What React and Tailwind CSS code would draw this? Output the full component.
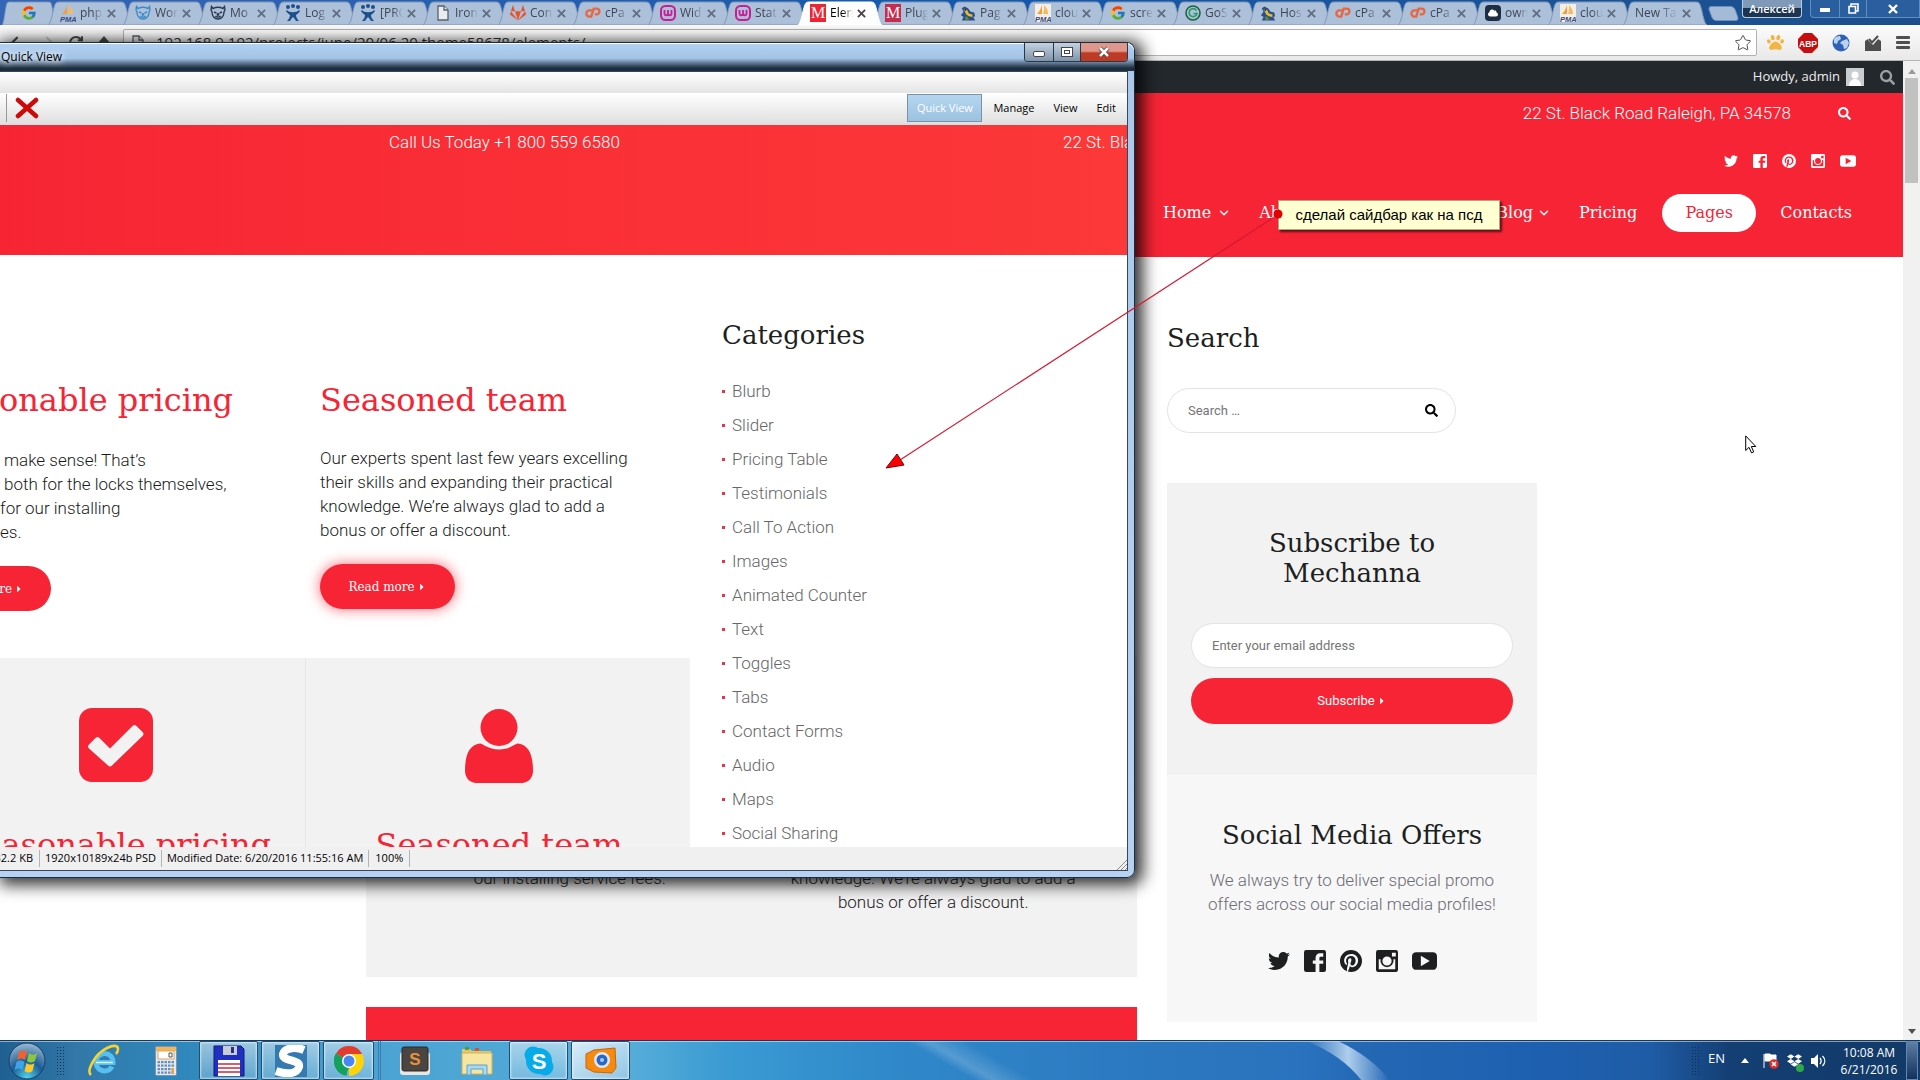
import React from "react";
import { FaTwitter, FaSearch, FaGitlab, FaCloud, FaDropbox, FaPaw, FaCaretRight } from "react-icons/fa";
import { FcGoogle } from "react-icons/fc";
import { ChevronDown, ArrowLeft, ArrowRight, RotateCw, Star } from "lucide-react";

const SLAB = "font-['Roboto_Slab','DejaVu_Serif',serif]";
const UI = "font-['Open_Sans','Noto_Sans',sans-serif]";

/* ---------- favicons ---------- */
function Pma({ boxed }) {
  return (
    <svg viewBox="0 0 16 18" className="h-[18px] w-4">
      {boxed && <rect width="16" height="18" fill="#f4efe4" />}
      <path d="M7 1v9H2C4 8 6 5 7 1z" fill="#f0a03c" />
      <path d="M9 1c3 3 4 6 4 9H8c1-3 1.500-6 1-9z" fill="#f5b866" />
      <text x="0" y="17.500" fontSize="7.500" fontWeight="bold" fontStyle="italic" fill="#394a80" fontFamily="Liberation Sans">PMA</text>
    </svg>
  );
}
function Bear({ color }) {
  return (
    <svg viewBox="0 0 16 16" className="size-4" fill="none" stroke={color} strokeWidth="1.400">
      <path d="M3 3.500L1.500 1.500 1 5l1 2c0 4 2.500 7 6 7s6-3 6-7l1-2-.5-3.500L13 3.500C10 2 6 2 3 3.500z" />
      <path d="M4 7l2.500 1M12 7L9.500 8M5.500 11c1 1.500 4 1.500 5 0" />
      <circle cx="8" cy="9.500" r=".7" fill={color} />
    </svg>
  );
}
function Jira() {
  return (
    <svg viewBox="0 0 16 18" className="h-[18px] w-4" fill="#1d4f8c">
      <circle cx="3" cy="3" r="2" /><circle cx="8" cy="2" r="2" /><circle cx="13" cy="3" r="2" />
      <path d="M2 6c2 3 10 3 12 0l1 1c-1 2-3 3-4 4 0 2 1 4 3 6h-3c-1-2-2-3-3-4-1 1-2 2-3 4H2c2-2 3-4 3-6-1-1-3-2-4-4z" />
    </svg>
  );
}
function PageIcon() {
  return (
    <svg viewBox="0 0 12 16" className="h-4 w-3 shrink-0" fill="#e9edf3" stroke="#5a6068" strokeWidth="1.300">
      <path d="M1 1h6l4 4v10H1z" /><path d="M7 1v4h4" />
    </svg>
  );
}
function CPanel() {
  return (
    <svg viewBox="0 0 18 16" className="h-4 w-[18px]" fill="none" stroke="#e8663f" strokeWidth="2.600">
      <path d="M8.500 5H5a3.500 3.500 0 0 0 0 7h2L9.800 3H13a3.200 3.200 0 0 1 0 6.500h-2" />
    </svg>
  );
}
function Wmark() {
  return (
    <svg viewBox="0 0 16 16" className="size-4" fill="none" stroke="#c81c93" strokeWidth="2">
      <rect x="1" y="1" width="14" height="14" rx="4.500" /><path d="M4.500 5v3.500a1.700 1.700 0 0 0 3.500 0V5v3.500a1.700 1.700 0 0 0 3.500 0V5" strokeWidth="1.800" />
    </svg>
  );
}
function Mmark({ dim }) {
  return <span className={`flex h-[18px] w-4 items-center justify-center font-['Liberation_Serif',serif] text-base text-white ${dim ? "bg-[#c62c50]" : "bg-[#ee2433]"}`}>M</span>;
}
function Joom() {
  return (
    <svg viewBox="0 0 18 18" className="size-[17px]">
      <path d="M2 3l3-2 4 2 3 4 4 1 1 4-2 1 2 4H2l2-4-3-2 3-4z" fill="#2c4f8c" />
      <path d="M4 4l4 1 2 4 4 1v3l-4-1-3-2z" fill="#e8bd2d" />
      <path d="M6 12l3 1 1 3H6z" fill="#5d8f3a" /><circle cx="6" cy="5" r="1" fill="#222" />
    </svg>
  );
}
function GoS() {
  return (
    <svg viewBox="0 0 16 16" className="size-4" fill="none" strokeWidth="1.600">
      <circle cx="8" cy="8" r="7" stroke="#17643f" /><path d="M11.500 5.500a4 4 0 1 0 .5 3H8.500" stroke="#2a9d63" />
    </svg>
  );
}
function Own() {
  return <span className="flex size-4 items-center justify-center rounded-sm bg-[#1d2d44] text-[10px] text-white"><FaCloud /></span>;
}

const TABS = [
  ["php", <Pma />], ["Wor", <Bear color="#3c8ac9" />], ["Mo", <Bear color="#2b3b50" />], ["Log", <Jira />], ["[PRO", <Jira />],
  ["Iron", <PageIcon />], ["Con", <FaGitlab className="size-4 text-[#e65328]" />], ["cPa", <CPanel />], ["Wid", <Wmark />], ["Stat", <Wmark />],
  ["Elen", <Mmark />, true], ["Plug", <Mmark dim />], ["Pag", <Joom />], ["clou", <Pma boxed />], ["scre", <FcGoogle className="size-4" />],
  ["GoS", <GoS />], ["Hos", <Joom />], ["cPa", <CPanel />], ["cPa", <CPanel />], ["own", <Own />], ["clou", <Pma boxed />], ["New Ta", null],
];

function TabShape({ active }) {
  return (
    <svg viewBox="0 0 84 24" preserveAspectRatio="none" className="absolute inset-0 size-full">
      <path d="M0 24C4 22 5 5 8 2Q9 1 11 1H73Q75 1 76 2C79 5 80 22 84 24z" fill={active ? "#fdfdfd" : "#adc0d9"} stroke={active ? "#fff" : "#8298b8"} strokeWidth="1" />
    </svg>
  );
}
function Tab({ label, icon, active }) {
  return (
    <button className={`relative -mr-[9px] h-6 w-[84px] shrink-0 ${active ? "z-10" : ""}`}>
      <TabShape active={active} />
      <span className="relative flex h-6 items-center gap-1 pr-4 pl-3">
        {icon && <span className="flex w-4 shrink-0 justify-center">{icon}</span>}
        <span className={`flex-1 overflow-hidden text-left text-xs whitespace-nowrap [mask-image:linear-gradient(to_right,black_55%,transparent)] ${active ? "text-black" : "text-[#3c4653]"}`}>{label}</span>
        <svg viewBox="0 0 10 10" className={`size-[9px] shrink-0 ${active ? "text-[#4a4048]" : "text-[#5f6d80]"}`} stroke="currentColor" strokeWidth="2"><path d="M1 1l8 8M9 1L1 9" /></svg>
      </span>
    </button>
  );
}

function TabStrip() {
  return (
    <div className={`flex h-[25px] shrink-0 items-end bg-linear-to-r from-[#3565b5] via-[#1259ad] to-[#1d4f8b] ${UI}`}>
      <button aria-label="Google" className="relative ml-0.5 -mr-2 h-6 w-[54px] shrink-0">
        <TabShape />
        <span className="relative flex h-6 items-center justify-center"><FcGoogle className="size-4" /></span>
      </button>
      {TABS.map(([label, icon, active], i) => <Tab key={i} label={label} icon={icon} active={active} />)}
      <button aria-label="New tab" className="mb-1 ml-3 h-[15px] w-[27px] shrink-0 skew-x-[20deg] rounded-sm border border-[#6f90bb] bg-[#a4bbd8]" />
      <div className="ml-auto flex h-[19px] items-start gap-2 self-start">
        <button className="h-[18px] rounded-b border border-t-0 border-[#b9cbe0] bg-linear-to-b from-[#7f99b9] from-50% to-[#1d3450] to-50% px-1.5 text-[11px] leading-4 font-semibold text-white">Алексей</button>
        <div className="flex h-[18px] rounded-bl border border-t-0 border-[#5f8dbf] bg-[#2a5f9f] text-white">
          <button aria-label="Minimize" className="flex w-7 items-center justify-center"><span className="mt-0.5 h-1 w-2.5 bg-white" /></button>
          <button aria-label="Restore" className="flex w-7 items-center justify-center border-x border-[#5f8dbf]">
            <svg viewBox="0 0 11 11" className="size-[11px]" fill="none" stroke="white" strokeWidth="1.600"><path d="M3 3V1h7v7H8" /><path d="M1 3.500h6.500V10H1z" /></svg>
          </button>
          <button aria-label="Close" className="flex w-[52px] items-center justify-center">
            <svg viewBox="0 0 10 10" className="size-2.5" stroke="white" strokeWidth="2.400"><path d="M1 1l8 8M9 1L1 9" /></svg>
          </button>
        </div>
      </div>
    </div>
  );
}

function AddressBar() {
  return (
    <div className={`flex h-9 shrink-0 items-center border-b border-[#b5b5b5] bg-linear-to-b from-[#fbfbfb] to-[#e9e9e9] pl-2 text-[#4a4a4a] ${UI}`}>
      <div className="flex w-[115px] items-center gap-3">
        <ArrowLeft size={18} strokeWidth={3} /><ArrowRight size={18} strokeWidth={3} className="text-[#cfcfcf]" /><RotateCw size={16} strokeWidth={3} />
        <svg viewBox="0 0 16 16" className="size-4" fill="currentColor"><path d="M8 1l7 8h-2v6H3V9H1z" /></svg>
      </div>
      <div className="flex h-[27px] flex-1 items-center rounded-xs border border-[#b3b1b0] bg-white pr-1 pl-2">
        <PageIcon />
        <input aria-label="Address" defaultValue="192.168.9.192/projects/june/20/06.20.theme58678/elements/" className="ml-3 w-full bg-transparent text-[15px] text-[#333] outline-none" />
        <Star size={18} strokeWidth={1.300} className="shrink-0" />
      </div>
      <div className="flex w-[163px] items-center justify-between pr-2.5 pl-2.5">
        <FaPaw className="size-[17px] text-[#f2b544]" />
        <svg viewBox="0 0 20 20" className="size-5"><path d="M6 0h8l6 6v8l-6 6H6l-6-6V6z" fill="#c70d0d" /><text x="10" y="13.500" textAnchor="middle" fontSize="8.500" fontWeight="bold" fill="#fff" fontFamily="Liberation Sans">ABP</text></svg>
        <svg viewBox="0 0 18 18" className="size-[18px]"><circle cx="9" cy="9" r="8.500" fill="#2f62b4" /><path d="M2 5c2-3 5-3 6-3l1 3-3 2-1 3-3-1zM10 7l5-2 2 4-2 5-3 1-1-4-3-2z" fill="#b9d3ef" /></svg>
        <svg viewBox="0 0 18 18" className="size-[18px]"><path d="M1 7l3-2h10l3 2v10H1z" fill="#4d4d4d" /><path d="M4 6l5 5 6-7-3-2H8L4 5z" fill="#f3f3f3" /><path d="M5 5l3 3.500L14 2" stroke="#4d4d4d" strokeWidth="2" fill="none" /></svg>
        <svg viewBox="0 0 14 14" className="size-3.5" fill="#505050"><rect y="0" width="14" height="3" rx="1" /><rect y="5" width="14" height="3" rx="1" /><rect y="10" width="14" height="3" rx="1" /></svg>
      </div>
    </div>
  );
}

/* ---------- web page ---------- */
function Facebook() {
  return <svg viewBox="2 2 20 20" fill="currentColor" className="size-full"><path d="M4 2H20A2 2 0 0 1 22 4V20A2 2 0 0 1 20 22H4A2 2 0 0 1 2 20V4A2 2 0 0 1 4 2M19.500 5H16.500A4 4 0 0 0 12.500 9V11.500H10V14.500H12.500V22H16V14.500H19.500V11.500H16V9.200A1 1 0 0 1 17 8.200H19.500Z" /></svg>;
}
function Pinterest() {
  return <svg viewBox="2 2 20 20" fill="currentColor" className="size-full"><path d="M9.040 21.540C10 21.830 10.970 22 12 22A10 10 0 0 0 22 12A10 10 0 0 0 12 2A10 10 0 0 0 2 12C2 16.250 4.670 19.900 8.440 21.340C8.350 20.560 8.260 19.270 8.440 18.380L9.590 13.440C9.590 13.440 9.300 12.860 9.300 11.940C9.300 10.560 10.160 9.530 11.140 9.530C12 9.530 12.400 10.160 12.400 10.970C12.400 11.830 11.830 13.060 11.540 14.240C11.370 15.220 12.060 16.080 13.060 16.080C14.840 16.080 16.220 14.180 16.220 11.500C16.220 9.100 14.500 7.460 12.030 7.460C9.210 7.460 7.550 9.560 7.550 11.770C7.550 12.630 7.830 13.500 8.290 14.070C8.380 14.130 8.380 14.210 8.350 14.360L8.060 15.450C8.060 15.620 7.950 15.680 7.780 15.560C6.500 15 5.760 13.180 5.760 11.710C5.760 8.550 8 5.680 12.320 5.680C15.760 5.680 18.440 8.150 18.440 11.430C18.440 14.870 16.310 17.630 13.260 17.630C12.290 17.630 11.340 17.110 11 16.500L10.330 18.870C10.100 19.730 9.470 20.880 9.040 21.500V21.540Z" /></svg>;
}
function Instagram() {
  return <svg viewBox="0 0 20 20" fill="currentColor" fillRule="evenodd" className="size-full"><path d="M2 0h16a2 2 0 0 1 2 2v16a2 2 0 0 1-2 2H2a2 2 0 0 1-2-2V2a2 2 0 0 1 2-2zM14.500 2.500v3.500H18V2.500zM2.500 8.500V17.500h15V8.500h-1.600a6 6 0 1 1-11.800 0zM10 5.800a4.200 4.200 0 1 0 0 8.400 4.200 4.200 0 0 0 0-8.400z" /></svg>;
}
function Youtube() {
  return <svg viewBox="0 0 24 20" fill="currentColor" fillRule="evenodd" className="size-full"><path d="M4 1.500h16a4 4 0 0 1 4 4v9a4 4 0 0 1-4 4H4a4 4 0 0 1-4-4v-9a4 4 0 0 1 4-4zM8.500 5v10L17 10z" /></svg>;
}
function Socials({ small }) {
  const s = small ? "size-3.5" : "size-[22px]";
  const w = small ? "h-3.5 w-4" : "h-[22px] w-[25px]";
  return (
    <div className={`flex items-center ${small ? "gap-[15px]" : "justify-center gap-3.5"}`}>
      <a href="#" aria-label="Twitter" className={s}><FaTwitter className="size-full" /></a>
      <a href="#" aria-label="Facebook" className={s}><Facebook /></a>
      <a href="#" aria-label="Pinterest" className={s}><Pinterest /></a>
      <a href="#" aria-label="Instagram" className={s}><Instagram /></a>
      <a href="#" aria-label="YouTube" className={w}><Youtube /></a>
    </div>
  );
}

function SiteHeader() {
  return (
    <header className="flex h-[164px] shrink-0 flex-col items-end bg-[#f62434] pr-[47px] text-white">
      <div className="flex h-[41px] items-center text-[17px] font-light">
        <span>22 St. Black Road Raleigh, PA 34578</span>
        <button aria-label="Search" className="ml-[47px] pr-[5px]"><FaSearch size={13} /></button>
      </div>
      <div className="flex h-[53px] items-center"><Socials small /></div>
      <nav className={`flex h-[52px] w-[693px] items-center text-base ${SLAB}`}>
        <a href="#" className="flex items-center gap-1.5">Home <ChevronDown size={14} strokeWidth={2.500} /></a>
        <a href="#" className="ml-7">About</a>
        <a href="#" className="ml-auto flex items-center gap-1">Blog <ChevronDown size={14} strokeWidth={2.500} /></a>
        <a href="#" className="ml-7">Pricing</a>
        <a href="#" className="ml-[25px] flex h-[38px] w-[94px] items-center justify-center rounded-full bg-white text-[#f62434]">Pages</a>
        <a href="#" className="mr-1 ml-6">Contacts</a>
      </nav>
    </header>
  );
}

function SiteBody() {
  const heading = `text-[26px] leading-[30px] text-[#1d1f21] ${SLAB}`;
  const field = "h-[45px] w-full rounded-full border border-[#e3e3e3] bg-white px-5 text-[13px] text-[#555] outline-none placeholder:text-[#757575]";
  return (
    <main className="mx-auto flex w-full max-w-[1171px] gap-[30px]">
      <div className="flex-1 pt-[400px] text-[17px] leading-6 font-light text-[#222]">
        <section className="grid h-80 grid-cols-2 bg-[#f2f2f2] px-[22px] pt-[209px] text-center">
          <p>our installing service fees.</p>
          <p>knowledge. We’re always glad to add a<br />bonus or offer a discount.</p>
        </section>
        <section className="mt-[30px] h-40 bg-[#f62434]" />
      </div>
      <aside className="w-[370px] pt-[66px]">
        <h2 className={heading}>Search</h2>
        <form className="relative mt-[35px] w-[289px]">
          <input aria-label="Search" placeholder="Search …" className={field} />
          <button type="button" aria-label="Submit search" className="absolute top-4 right-[18px] text-black"><FaSearch size={13} /></button>
        </form>
        <section className="mt-[50px] flex h-[290px] flex-col items-center bg-[#f2f2f2] px-6 pt-[45px]">
          <h2 className={`text-center ${heading}`}>Subscribe to<br />Mechanna</h2>
          <input aria-label="Email" placeholder="Enter your email address" className={`mt-[35px] shrink-0 ${field}`} />
          <button className="mt-2.5 flex h-[46px] w-full shrink-0 items-center justify-center rounded-full bg-[#f62434] text-[13px] text-white">Subscribe <FaCaretRight size={10} className="ml-0.5" /></button>
        </section>
        <section className="h-[249px] border-t border-[#ececec] bg-[#f7f7f7] pt-[46px] text-center">
          <h2 className={heading}>Social Media Offers</h2>
          <p className="mt-[18px] mb-[34px] text-[17px] leading-6 font-light text-[#6b6b73]">We always try to deliver special promo<br />offers across our social media profiles!</p>
          <div className="text-[#1d1f21]"><Socials /></div>
        </section>
      </aside>
    </main>
  );
}

function Scrollbar() {
  return (
    <div className="flex w-[17px] shrink-0 flex-col items-center bg-[#f1f1f1] py-1.5">
      <span className="mt-0.5 border-x-4 border-b-[5px] border-x-transparent border-b-[#9a9a9a]" />
      <span className="mt-1 h-[105px] w-[13px] bg-[#c1c1c1]" />
      <span className="mt-auto border-x-4 border-t-[5px] border-x-transparent border-t-[#505050]" />
    </div>
  );
}

/* ---------- Quick View window ---------- */
const CATEGORIES = ["Blurb", "Slider", "Pricing Table", "Testimonials", "Call To Action", "Images", "Animated Counter", "Text", "Toggles", "Tabs", "Contact Forms", "Audio", "Maps", "Social Sharing"];

function CheckSquare() {
  return (
    <svg viewBox="0 0 74 74" className="size-[74px]"><rect width="74" height="74" rx="13" fill="#f62434" /><path d="M10 36.500l6.500-6.500q2-2 4 0L31 40.500 53.500 18q2-2 4 0l6 6q2 2 0 4L33 57.500q-2 2-4 0L10 40.500q-2-2 0-4z" fill="#f2f2f2" /></svg>
  );
}
function Person() {
  return (
    <svg viewBox="0 0 68 74" className="h-[74px] w-[68px]" fill="#f62434"><ellipse cx="34" cy="18.500" rx="18.500" ry="18.500" /><path d="M15 34.500C4 36 0 46 0 62c0 7 5 12 11.500 12h45C63 74 68 69 68 62c0-16-4-26-15-27.500-3 0-8 6-19 6s-16-6-19-6z" /></svg>
  );
}

function ImageView() {
  const title = `text-[32px] leading-10 whitespace-nowrap text-[#f62434] ${SLAB}`;
  const copy = "text-[17px] leading-6 font-light whitespace-nowrap text-[#1a1a1a]";
  const pill = `flex h-[45px] items-center gap-0.5 rounded-full bg-[#f62434] text-xs text-white ${SLAB}`;
  return (
    <div className="flex min-h-0 flex-1 flex-col overflow-hidden bg-white font-['Roboto',sans-serif]">
      <div className="flex h-[130px] shrink-0 items-start justify-between overflow-hidden bg-linear-to-r from-[#f72534] to-[#fc3838] pt-1 pl-[389px] text-[17px] leading-[26px] font-light text-white">
        <span>Call Us Today +1 800 559 6580</span>
        <span className="w-16 overflow-hidden whitespace-nowrap">22 St. Black</span>
      </div>
      <div className="flex min-h-0 flex-1 overflow-hidden">
        <div className="flex w-[690px] shrink-0 flex-col pt-[125px]">
          <div className="flex h-[278px] shrink-0">
            <div className="w-80 overflow-hidden">
              <h2 className={`flex w-[233px] justify-end ${title}`}>onable pricing</h2>
              <p className={`mt-7 ${copy}`}><span className="pl-1">make sense! That’s</span><br /><span className="pl-1">both for the locks themselves,</span><br />for our installing<br />es.</p>
              <button className={`mt-[22px] w-[51px] justify-end rounded-l-none pr-[27px] ${pill}`}>ore <FaCaretRight size={10} className="shrink-0" /></button>
            </div>
            <div>
              <h2 className={title}>Seasoned team</h2>
              <p className={`mt-[26px] ${copy}`}>Our experts spent last few years excelling<br />their skills and expanding their practical<br />knowledge. We’re always glad to add a<br />bonus or offer a discount.</p>
              <button className={`mt-[22px] w-[135px] justify-center shadow-[0_0_12px_2px_rgba(246,36,52,0.5)] ${pill}`}>Read more <FaCaretRight size={10} className="shrink-0" /></button>
            </div>
          </div>
          <div className="flex flex-1 bg-[#f2f2f2]">
            <div className="flex w-[306px] flex-col border-r border-[#e6e6e6] pt-[50px]">
              <div className="pl-[79px]"><CheckSquare /></div>
              <h2 className={`mt-[43px] flex w-[271px] justify-end ${title}`}>asonable pricing</h2>
            </div>
            <div className="flex flex-1 flex-col items-center pt-[51px] pl-0.5">
              <Person />
              <h2 className={`mt-[42px] ${title}`}>Seasoned team</h2>
            </div>
          </div>
        </div>
        <div className="pt-[65px] pl-8">
          <h2 className={`text-[26px] leading-[30px] text-[#1d1f21] ${SLAB}`}>Categories</h2>
          <ul className="mt-6 text-[17px] leading-[34px] font-light text-[#666]">
            {CATEGORIES.map((c) => (
              <li key={c} className="flex items-center gap-[7px]"><span className="size-[3px] bg-[#e5344a]" /><a href="#">{c}</a></li>
            ))}
          </ul>
        </div>
      </div>
    </div>
  );
}

function QuickViewWindow() {
  return (
    <div className={`absolute top-[42px] left-0 flex h-[836px] w-[1135px] flex-col rounded-r-lg border border-l-0 border-[#1b2c40] bg-linear-to-b from-[#a9c8ea] to-[#b6d2f0] pr-1.5 pb-1.5 shadow-[4px_3px_16px_4px_rgba(0,0,0,0.8)] ${UI}`}>
      <div className="-mr-1.5 flex h-7 shrink-0 items-start justify-between rounded-tr-lg bg-linear-to-b from-[#b4d2f2] from-0% via-[#a3c3e6] via-55% to-[#1e2e3c] to-90% pr-1.5 shadow-[inset_0_1px_0_#fff]">
        <span className="pl-px text-xs leading-[28px] text-black [text-shadow:0_0_6px_#fff,0_0_8px_#fff]">Quick View</span>
        <div className="flex h-[19px] overflow-hidden rounded-b border border-t-0 border-[#27384b]">
          <button aria-label="Minimize" className="flex w-7 items-center justify-center bg-linear-to-b from-[#c5d2df] to-[#7f93a8]"><span className="mt-1 h-1.5 w-3 rounded-xs border border-[#445] bg-white" /></button>
          <button aria-label="Maximize" className="flex w-7 items-center justify-center border-x border-[#27384b] bg-linear-to-b from-[#c5d2df] to-[#7f93a8]"><span className="flex h-2.5 w-3 items-center justify-center border border-[#445] bg-white"><span className="h-1 w-1.5 border border-[#445]" /></span></button>
          <button aria-label="Close" className="flex w-[46px] items-center justify-center bg-linear-to-b from-[#e0978b] from-45% to-[#bf3a24] to-55%">
            <svg viewBox="0 0 12 12" className="size-3"><path d="M2 2l8 8M10 2l-8 8" stroke="#5a2a2a" strokeWidth="4" /><path d="M2 2l8 8M10 2l-8 8" stroke="#fff" strokeWidth="2.600" /></svg>
          </button>
        </div>
      </div>
      <div className="flex min-h-0 flex-1 flex-col border border-l-0 border-[#33485e]">
        <div className="h-[21px] shrink-0 bg-linear-to-b from-white to-[#e4e4e4]" />
        <div className="flex h-8 shrink-0 items-start justify-between bg-linear-to-b from-white to-[#dedede] pt-px text-[11px] text-black">
          <div className="flex h-7 items-center gap-2 pl-1.5">
            <span className="h-full w-px bg-[#999]" />
            <button aria-label="Delete"><svg viewBox="0 0 24 22" className="h-[22px] w-6" stroke="#cc0a0a" strokeWidth="4.500" strokeLinecap="round"><path d="M3 3l18 16M21 3L3 19" /></svg></button>
          </div>
          <div className="flex h-7 items-center pr-[11px]">
            <button className="h-7 w-[75px] border border-[#7a91a6] bg-linear-to-b from-[#b5d6f0] to-[#9cc2e0] text-white">Quick View</button>
            <button className="ml-[11px]">Manage</button>
            <button className="ml-[19px]">View</button>
            <button className="ml-[19px]">Edit</button>
          </div>
        </div>
        <ImageView />
        <div className="flex h-[23px] shrink-0 items-center bg-[#f0f0f0] text-[11px] whitespace-nowrap text-black">
          <span className="flex w-[33px] justify-end overflow-hidden">32.2 KB</span>
          <span className="ml-1.5 border-x border-[#b5b5b5] px-[5px]">1920x10189x24b PSD</span>
          <span className="px-[5px]">Modified Date: 6/20/2016 11:55:16 AM</span>
          <span className="border-x border-[#b5b5b5] px-1.5">100%</span>
          <svg viewBox="0 0 10 10" className="ml-auto size-2.5 self-end" stroke="#8a8a8a"><path d="M0 10L10 0M4 10l6-6M8 10l2-2" /></svg>
        </div>
      </div>
    </div>
  );
}

function Annotation() {
  return (
    <>
      <div className="absolute top-[200px] left-[1278px] flex h-[30px] w-[222px] items-center justify-center border border-[#a9a988] bg-[#ffffd2] font-['Liberation_Sans',sans-serif] text-[15px] text-black shadow-[2px_2px_2px_rgba(0,0,0,0.6)]">сделай сайдбар как на псд</div>
      <svg viewBox="0 0 410 280" className="pointer-events-none absolute top-[200px] left-[880px] h-[280px] w-[410px]">
        <path d="M399 14L20 260" stroke="#d81830" strokeWidth="1.200" />
        <path d="M6 268l11-14 7 11z" fill="#f00" stroke="#700" strokeWidth="1" />
        <circle cx="398" cy="14" r="4.500" fill="#e00000" />
      </svg>
      <svg viewBox="0 0 12 19" className="pointer-events-none absolute top-[435px] left-[1745px] h-[19px] w-3"><path d="M.7.900v14.600l3.300-3.200 2.500 5.600 2.200-1-2.400-5.400h4.500z" fill="#fff" stroke="#000" /></svg>
    </>
  );
}

/* ---------- taskbar ---------- */
function TaskItem({ label, w, open, light, children }) {
  return (
    <button aria-label={label} className={`flex h-full items-center justify-center ${w} ${open ? "rounded-xs border border-[#214f74] shadow-[inset_0_0_2px_1px_rgba(255,255,255,0.6)]" : ""} ${open ? (light ? "bg-linear-to-br from-[#e8f4fc]/90 to-[#9dcbe8]/80" : "bg-linear-to-b from-white/50 to-white/20") : ""}`}>{children}</button>
  );
}
function Grip() {
  return <span className="h-[30px] w-[9px] bg-[radial-gradient(#0b2f52_1px,transparent_1px)] bg-size-[3px_3px]" />;
}

function Taskbar() {
  return (
    <footer className={`relative z-10 flex h-10 shrink-0 items-center overflow-hidden border-t border-[#12395f] bg-[linear-gradient(30deg,transparent_49%,#ffffff30_50%,transparent_52%),linear-gradient(90deg,#1f5f92_0%,#3278a9_4%,#2f86ba_9%,#4ba3d3_20%,#55acd9_33%,#3a9ad2_38%,#3089ca_46%,#2b78c0_60%,#2a72bd_68%,#2468b4_71%,#1d60b0_80%,#1f5ca6_86%,#143f74_90%,#123a68_100%)] shadow-[inset_0_1px_0_rgba(255,255,255,0.5)] ${UI}`}>
      <svg viewBox="0 0 90 40" className="pointer-events-none absolute inset-y-0 left-[68%] h-10 w-[90px]">
        <defs><linearGradient id="ray" x1="0" y1="0" x2="1" y2="0"><stop offset="0" stopColor="#cfe6fa" stopOpacity="0" /><stop offset=".5" stopColor="#cfe6fa" stopOpacity=".8" /><stop offset="1" stopColor="#cfe6fa" stopOpacity="0" /></linearGradient></defs>
        <path d="M0 0h32q34 16 52 40H56Q36 14 0 0z" fill="url(#ray)" />
      </svg>
      <button aria-label="Start" className="ml-2">
        <svg viewBox="0 0 38 38" className="size-[38px]">
          <defs><radialGradient id="orb" cx="50%" cy="95%" r="90%"><stop offset="0" stopColor="#4fd0f0" /><stop offset="0.500" stopColor="#1a5c96" /><stop offset="1" stopColor="#8fb2cc" /></radialGradient></defs>
          <circle cx="19" cy="19" r="18" fill="url(#orb)" stroke="#16405f" />
          <path d="M11 10c3-2 5-2 8 0l-2 8c-3-2-5-2-8 0z" fill="#f0622d" /><path d="M21 11c3 2 5 2 8 0l-2 8c-3 2-5 2-8 0z" fill="#8cc63e" />
          <path d="M8.500 20c3-2 5-2 8 0l-2 8c-3-2-5-2-8 0z" fill="#3fa3e8" /><path d="M18.500 21c3 2 5 2 8 0l-2 8c-3 2-5 2-8 0z" fill="#fcc92c" />
        </svg>
      </button>
      <span className="mr-2 ml-2.5 flex"><Grip /></span>
      <TaskItem label="Internet Explorer" w="w-[62px]">
        <svg viewBox="0 0 34 34" className="size-[34px]" fill="none"><path d="M9 18.500h17c0-6-4-9-8.500-9S9 13 9 18s3.500 9 8.500 9c3.500 0 6-1.500 7.500-4.500" stroke="#56c0f0" strokeWidth="5" /><path d="M9 18.500h17" stroke="#d8f3ff" strokeWidth="1.500" /><path d="M4 31C-1 27 8 10 20 4c6-3 11-3 11 1 0 2-1 4-2 5" stroke="#f7d231" strokeWidth="2.600" /></svg>
      </TaskItem>
      <TaskItem label="Calculator" w="w-[62px]">
        <svg viewBox="0 0 22 30" className="h-[30px] w-[22px]"><rect x=".5" y=".5" width="21" height="29" rx="1.500" fill="#dfeaf4" stroke="#7d96ad" /><path d="M1 1h20v4H1z" fill="#f3b45c" /><rect x="3" y="5" width="16" height="8" fill="#fff" stroke="#e0a357" /><path d="M14 7h3v4h-3z" fill="none" stroke="#555" /><g fill="#6e8db0">{[15, 18.500, 22, 25.500].map((y) => [2.500, 6, 9.500, 13, 16.500].map((x) => <rect key={`${x}-${y}`} x={x} y={y} width="2.500" height="2.200" />))}</g><rect x="16.500" y="22" width="2.500" height="5.700" fill="#f0a03c" /></svg>
      </TaskItem>
      <div className="ml-0.5 flex h-full gap-[3px]">
        <TaskItem label="File manager" w="w-[59px]" open>
          <svg viewBox="0 0 32 32" className="size-8"><path d="M1 1h27l3 3v27H1z" fill="#1f2fc4" stroke="#101a70" /><rect x="10" y="1" width="14" height="9" fill="#c9ccd4" /><rect x="18" y="2" width="3" height="6" fill="#22308e" /><rect x="5" y="15" width="22" height="16" fill="#fff" /><path d="M5 19h22M5 23h22M5 27h22" stroke="#c92a3a" strokeWidth="1.300" /></svg>
        </TaskItem>
        <TaskItem label="Snagit" w="w-[59px]" open>
          <svg viewBox="0 0 32 32" className="size-8"><rect width="32" height="32" fill="#3479b0" /><path d="M29 5C22 2 10 2 8 9c-1 8 18 5 16 13-2 7-12 8-23 4" stroke="#fff" strokeWidth="8" fill="none" /></svg>
        </TaskItem>
        <TaskItem label="Chrome" w="w-[51px]" open>
          <svg viewBox="0 0 30 30" className="size-[30px]"><path d="M15 15L2 7.500A15 15 0 0 1 28 7.500z" fill="#e33b2e" /><path d="M15 15V8h13.200A15 15 0 0 1 15 30z" fill="#fcd209" /><path d="M15 15l-2.500 14.800A15 15 0 0 1 2 7.500z" fill="#16a05d" /><path d="M2 7.500L9 18.500 15 22l-4.500 7.300A15 15 0 0 1 2 7.500z" fill="#16a05d" /><circle cx="15" cy="15" r="7" fill="#fff" /><circle cx="15" cy="15" r="5.500" fill="#4587f3" /></svg>
        </TaskItem>
      </div>
      <span className="ml-1 h-full w-[3px] border-x border-[#3c7dac]" />
      <TaskItem label="Sublime Text" w="ml-[3px] w-[62px]">
        <svg viewBox="0 0 30 30" className="size-[30px]"><rect x="0" y="6" width="30" height="23" rx="3" fill="#e9e6e2" /><rect x="2" y="1" width="26" height="24" rx="2" fill="#4a4541" stroke="#2d2926" /><text x="15" y="19" textAnchor="middle" fontSize="17" fontWeight="bold" fill="#e8913e" fontFamily="Liberation Sans">S</text></svg>
      </TaskItem>
      <TaskItem label="Explorer" w="w-[62px]">
        <svg viewBox="0 0 32 32" className="size-8"><path d="M1 4h8l2 2h19v22H1z" fill="#e5c766" /><path d="M1 8h30v21H1z" fill="#f7e6a2" stroke="#d0b259" /><path d="M6 30V20h20v10h-4v-6H10v6z" fill="#a7daf2" stroke="#5aa3cc" /><rect x="4" y="2" width="4" height="3" fill="#45a048" /><rect x="14" y="3" width="4" height="3" fill="#d6532c" /></svg>
      </TaskItem>
      <div className="ml-px flex h-full gap-[3px]">
        <TaskItem label="Skype" w="w-[59px]" open>
          <svg viewBox="0 0 30 30" className="size-[30px]"><circle cx="9" cy="9" r="8.500" fill="#08abea" /><circle cx="21" cy="21" r="8.500" fill="#08abea" /><circle cx="15" cy="15" r="13" fill="#08abea" /><text x="15" y="23" textAnchor="middle" fontSize="22" fontWeight="bold" fill="#fff" fontFamily="Liberation Sans">S</text></svg>
        </TaskItem>
        <TaskItem label="Image viewer" w="w-[59px]" open light>
          <svg viewBox="0 0 32 28" className="h-7 w-8"><path d="M9 3l21-2 1 20-4 5-18-1-8-4V7z" fill="#f48a10" stroke="#c96508" /><circle cx="17" cy="13" r="8" fill="#dfe9f2" /><circle cx="17" cy="13" r="5.500" fill="#2a66c6" /><circle cx="17" cy="13" r="2" fill="#a5d0f5" /></svg>
        </TaskItem>
      </div>
      <div className="ml-auto flex h-full items-center text-xs text-white">
        <Grip />
        <span className="ml-2 pb-1 text-[13px]">EN</span>
        <span className="ml-4 border-x-4 border-b-[5px] border-x-transparent border-b-white" />
        <svg viewBox="0 0 16 16" className="ml-3.5 size-4"><path d="M1 1v14M2 1h5l1 1h5v7H8L7 8H2z" fill="#fff" stroke="#fff" /><circle cx="11" cy="11" r="4.800" fill="#df2c26" /><path d="M9 9l4 4M13 9l-4 4" stroke="#fff" strokeWidth="1.600" /></svg>
        <span className="relative ml-2 flex"><FaDropbox size={15} /><span className="absolute -right-0.5 -bottom-1 size-2 rounded-full bg-[#2fa84a]" /></span>
        <svg viewBox="0 0 16 16" className="ml-2 size-4" fill="#fff"><path d="M1 5h3l4-4v14l-4-4H1z" /><path d="M10 5c1.500 2 1.500 4 0 6M12.500 3c3 3 3 7 0 10" fill="none" stroke="#fff" strokeWidth="1.300" /></svg>
        <div className="ml-3.5 w-[58px] text-center leading-[17px]">10:08 AM<br />6/21/2016</div>
        <button aria-label="Show desktop" className="mr-0.5 ml-2 h-full w-3 border border-[#5f87b4] bg-linear-to-b from-[#5f7fa5] to-[#12315c]" />
      </div>
    </footer>
  );
}

export default function App() {
  return (
    <div className="relative flex h-screen flex-col overflow-hidden bg-white font-['Roboto',sans-serif]">
      <TabStrip />
      <AddressBar />
      <div className="flex min-h-0 flex-1">
        <div className="flex min-w-0 flex-1 flex-col overflow-hidden">
          <div className={`flex h-8 shrink-0 items-center justify-end gap-1.5 bg-[#23282d] pr-2 text-[13px] text-[#eee] ${UI}`}>
            <span>Howdy, admin</span>
            <svg viewBox="0 0 18 18" className="mr-2.5 size-[18px]"><rect width="18" height="18" fill="#c9cdd0" /><circle cx="9" cy="7" r="3.500" fill="#fff" /><path d="M3 18c0-5 3-7 6-7s6 2 6 7z" fill="#fff" /></svg>
            <FaSearch size={15} className="text-[#9ca1a6]" />
          </div>
          <SiteHeader />
          <SiteBody />
        </div>
        <Scrollbar />
      </div>
      <QuickViewWindow />
      <Annotation />
      <Taskbar />
    </div>
  );
}
